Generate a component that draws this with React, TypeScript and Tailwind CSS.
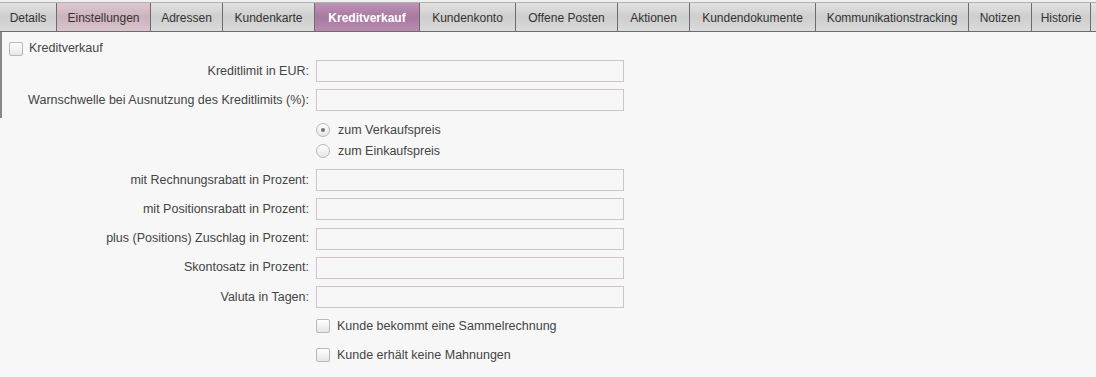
import React from "react";

const tabs = [
  { label: "Details", w: 57 },
  { label: "Einstellungen", w: 94, hover: true },
  { label: "Adressen", w: 72 },
  { label: "Kundenkarte", w: 92 },
  { label: "Kreditverkauf", w: 105, active: true },
  { label: "Kundenkonto", w: 96 },
  { label: "Offene Posten", w: 102 },
  { label: "Aktionen", w: 72 },
  { label: "Kundendokumente", w: 126 },
  { label: "Kommunikationstracking", w: 153 },
  { label: "Notizen", w: 63 },
  { label: "Historie", w: 59 },
];

const inputRows1 = ["Kreditlimit in EUR:", "Warnschwelle bei Ausnutzung des Kreditlimits (%):"];
const inputRows2 = [
  "mit Rechnungsrabatt in Prozent:",
  "mit Positionsrabatt in Prozent:",
  "plus (Positions) Zuschlag in Prozent:",
  "Skontosatz in Prozent:",
  "Valuta in Tagen:",
];

const Checkbox = () => (
  <span className="inline-block w-[14px] h-[14px] rounded-[2px] border border-[#b8b8b8] bg-gradient-to-b from-[#ffffff] to-[#e6e6e6] shrink-0" />
);

const Radio = ({ checked }: { checked?: boolean }) => (
  <span className="w-[14px] h-[14px] rounded-full border border-[#b8b8b8] bg-gradient-to-b from-[#ffffff] to-[#e6e6e6] shrink-0 flex items-center justify-center">
    {checked && <span className="w-[4px] h-[4px] rounded-full bg-[#777]" />}
  </span>
);

const Row = ({ label }: { label: string }) => (
  <div className="flex items-center h-[22px]">
    <div className="w-[316px] pr-[7px] text-right">{label}</div>
    <div className="w-[308px] h-[22px] border border-[#cdc4cd] bg-[#f7f7f7]" />
  </div>
);

const App: React.FC = () => {
  return (
    <div
      className="w-[1096px] h-[377px] bg-[#f7f7f7] text-[12.5px] text-[#444] overflow-hidden"
      style={{ fontFamily: '"Liberation Sans", Arial, sans-serif' }}
    >
      {/* Tab bar */}
      <div className="h-[3px] bg-[#f0f0f0] border-b border-[#b0b0b0]" />
      <div className="flex h-[29px] text-[12px] border-b border-[#6e6a6e] bg-gradient-to-b from-[#e4e4e4] via-[#d4d4d4] to-[#dcdcdc]">
        {tabs.map((t) => (
          <div
            key={t.label}
            style={{ width: t.w }}
            className={
              "h-full flex items-center justify-center pt-[1px] border-r border-[#6e6a6e] shrink-0 " +
              (t.active
                ? "bg-gradient-to-b from-[#bc93b6] via-[#a9799f] to-[#b88cb1] text-white font-bold"
                : t.hover
                ? "bg-gradient-to-b from-[#dcc8d0] via-[#cdb2bd] to-[#d8c4cc] text-[#333]"
                : "bg-gradient-to-b from-[#e2e2e2] via-[#cecece] to-[#dadada] text-[#333]")
            }
          >
            {t.label}
          </div>
        ))}
        <div className="flex-1" />
      </div>

      {/* Content */}
      <div className="relative">
        <div className="absolute left-0 top-0 w-[2px] h-[86px] bg-[#8a868a]" />
        <div className="flex items-center gap-[6px] pl-[9px] pt-[8px] h-[25px]">
          <Checkbox />
          <span>Kreditverkauf</span>
        </div>
        <div className="flex flex-col gap-[7px] mt-[3px]">
          {inputRows1.map((l) => (
            <Row key={l} label={l} />
          ))}
        </div>
        <div className="flex flex-col gap-[7px] pl-[316px] mt-[12px]">
          <div className="flex items-center gap-[8px] h-[14px]">
            <Radio checked />
            <span>zum Verkaufspreis</span>
          </div>
          <div className="flex items-center gap-[8px] h-[14px]">
            <Radio />
            <span>zum Einkaufspreis</span>
          </div>
        </div>
        <div className="flex flex-col gap-[7.25px] mt-[11px]">
          {inputRows2.map((l) => (
            <Row key={l} label={l} />
          ))}
        </div>
        <div className="flex flex-col gap-[15px] pl-[316px] mt-[11px]">
          <div className="flex items-center gap-[7px] h-[14px]">
            <Checkbox />
            <span>Kunde bekommt eine Sammelrechnung</span>
          </div>
          <div className="flex items-center gap-[7px] h-[14px]">
            <Checkbox />
            <span>Kunde erhält keine Mahnungen</span>
          </div>
        </div>
      </div>
    </div>
  );
};

export default App;
